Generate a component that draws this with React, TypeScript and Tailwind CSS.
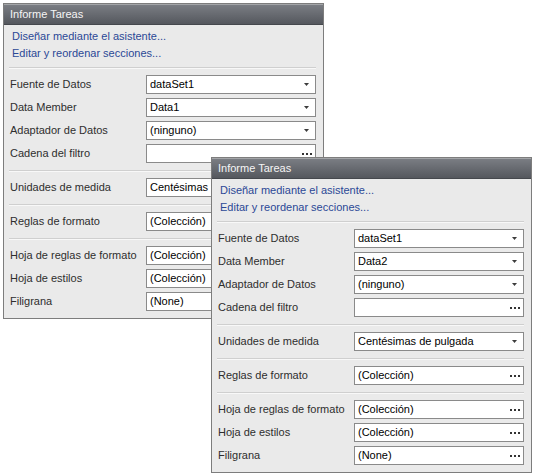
type Row = { label: string; value: string; kind: 'drop' | 'dots' };

function groupsFor(member: string): Row[][] {
  return [
    [
      { label: 'Fuente de Datos', value: 'dataSet1', kind: 'drop' },
      { label: 'Data Member', value: member, kind: 'drop' },
      { label: 'Adaptador de Datos', value: '(ninguno)', kind: 'drop' },
      { label: 'Cadena del filtro', value: '', kind: 'dots' },
    ],
    [{ label: 'Unidades de medida', value: 'Centésimas de pulgada', kind: 'drop' }],
    [{ label: 'Reglas de formato', value: '(Colección)', kind: 'dots' }],
    [
      { label: 'Hoja de reglas de formato', value: '(Colección)', kind: 'dots' },
      { label: 'Hoja de estilos', value: '(Colección)', kind: 'dots' },
      { label: 'Filigrana', value: '(None)', kind: 'dots' },
    ],
  ];
}

function Separator() {
  return (
    <div className="mt-[5px] mb-[4px]">
      <div className="h-px bg-[#cfcfcf]" />
      <div className="h-px bg-[#f8f8f8]" />
    </div>
  );
}

function Field({ row }: { row: Row }) {
  return (
    <div className="flex h-[23px] items-center">
      <div className="w-[137px] whitespace-nowrap pl-px text-[#2e2e2e]">{row.label}</div>
      <div className="flex h-[19px] w-[170px] items-center border border-[#8a8a8a] bg-white pl-[3px]">
        <span className="flex-1 whitespace-nowrap text-black">{row.value}</span>
        {row.kind === 'drop' ? (
          <svg width="5" height="3" viewBox="0 0 5 3" className="mr-[6px]">
            <polygon points="0,0 5,0 2.5,3" fill="#3c3c3c" />
          </svg>
        ) : (
          <div className="mr-[3px] flex gap-[2px]">
            <div className="h-[2px] w-[2px] bg-[#333]" />
            <div className="h-[2px] w-[2px] bg-[#333]" />
            <div className="h-[2px] w-[2px] bg-[#333]" />
          </div>
        )}
      </div>
    </div>
  );
}

function TaskPanel({ member }: { member: string }) {
  const groups = groupsFor(member);
  return (
    <div className="w-[321px] border border-[#7d7d7d] bg-[#eaeaea] text-[11px]">
      {/* title bar */}
      <div className="flex h-[21px] items-center border-t border-[#a3a5a8] border-b border-b-[#45484d] bg-gradient-to-b from-[#7a7d83] to-[#55585e] pl-[6px] text-[#f5f5f5]">
        Informe Tareas
      </div>
      <div className="pt-[3px] pr-[7px] pb-[5px] pl-[5px]">
        <div className="pl-[3px] leading-[17px] text-[#2a4896]">
          <div>Diseñar mediante el asistente...</div>
          <div>Editar y reordenar secciones...</div>
        </div>
        {groups.map((rows, i) => (
          <div key={i}>
            <Separator />
            {rows.map((r) => (
              <Field key={r.label} row={r} />
            ))}
          </div>
        ))}
      </div>
    </div>
  );
}

export default function App() {
  return (
    <div
      className="relative h-[473px] w-[535px] overflow-hidden bg-white"
      style={{ fontFamily: '"Liberation Sans", Arial, sans-serif' }}
    >
      <div className="absolute left-[3px] top-[3px]">
        <TaskPanel member="Data1" />
      </div>
      <div className="absolute left-[211px] top-[157px]">
        <TaskPanel member="Data2" />
      </div>
    </div>
  );
}
